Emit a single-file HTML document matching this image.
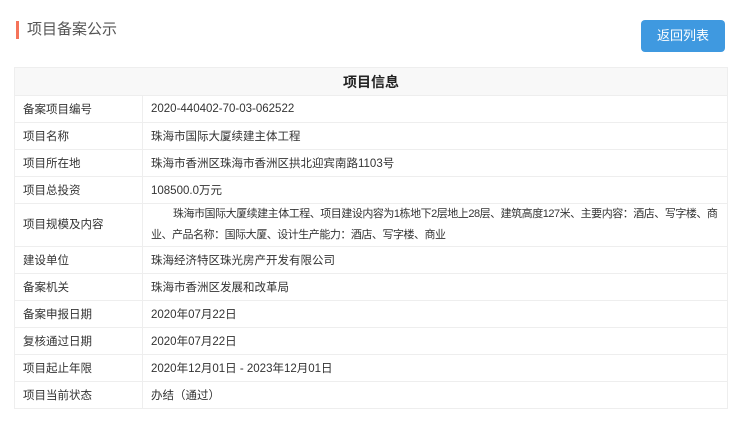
<!DOCTYPE html>
<html><head><meta charset="utf-8"><style>
body{margin:0;background:#fff;font-family:"Liberation Sans","Noto Sans CJK SC",sans-serif;width:740px;height:421px;overflow:hidden;position:relative}
.t{position:absolute;left:16px;top:21px;height:18px;border-left:3px solid #f5735a;padding-left:8px;font-size:15px;line-height:18px;color:#555}
.b{position:absolute;left:641px;top:20px;width:84px;height:32px;background:#3f99e0;border-radius:4px;color:#fff;font-size:13px;line-height:32px;text-align:center}
table{position:absolute;left:14px;top:67px;width:714px;border-collapse:collapse;font-size:11.5px;color:#333;table-layout:fixed}
td,th{border:1px solid #eee;padding:0 8px;height:26px;box-sizing:border-box;overflow:hidden}
th{background:#f8f8f8;height:28px;font-size:14px;font-weight:bold;color:#222}
tr.r td{height:27px}
.big td{height:42px;line-height:21px}
.big td.w{padding-right:0;white-space:nowrap;font-size:11px;letter-spacing:-0.48px}
</style></head><body>
<div class="t">项目备案公示</div>
<div class="b">返回列表</div>
<table>
<colgroup><col style="width:128px"><col></colgroup>
<tr><th colspan="2">项目信息</th></tr>
<tr class="r"><td>备案项目编号</td><td>2020-440402-70-03-062522</td></tr>
<tr class="r"><td>项目名称</td><td>珠海市国际大厦续建主体工程</td></tr>
<tr class="r"><td>项目所在地</td><td>珠海市香洲区珠海市香洲区拱北迎宾南路1103号</td></tr>
<tr class="r"><td>项目总投资</td><td>108500.0万元</td></tr>
<tr class="big"><td>项目规模及内容</td><td class="w"><span style="display:inline-block;width:22px"></span>珠海市国际大厦续建主体工程、项目建设内容为1栋地下2层地上28层、建筑高度127米、主要内容：酒店、写字楼、商<br>业、产品名称：国际大厦、设计生产能力：酒店、写字楼、商业</td></tr>
<tr class="r"><td>建设单位</td><td>珠海经济特区珠光房产开发有限公司</td></tr>
<tr class="r"><td>备案机关</td><td>珠海市香洲区发展和改革局</td></tr>
<tr class="r"><td>备案申报日期</td><td>2020年07月22日</td></tr>
<tr class="r"><td>复核通过日期</td><td>2020年07月22日</td></tr>
<tr class="r"><td>项目起止年限</td><td>2020年12月01日 - 2023年12月01日</td></tr>
<tr class="r"><td>项目当前状态</td><td>办结（通过）</td></tr>
</table>
</body></html>
